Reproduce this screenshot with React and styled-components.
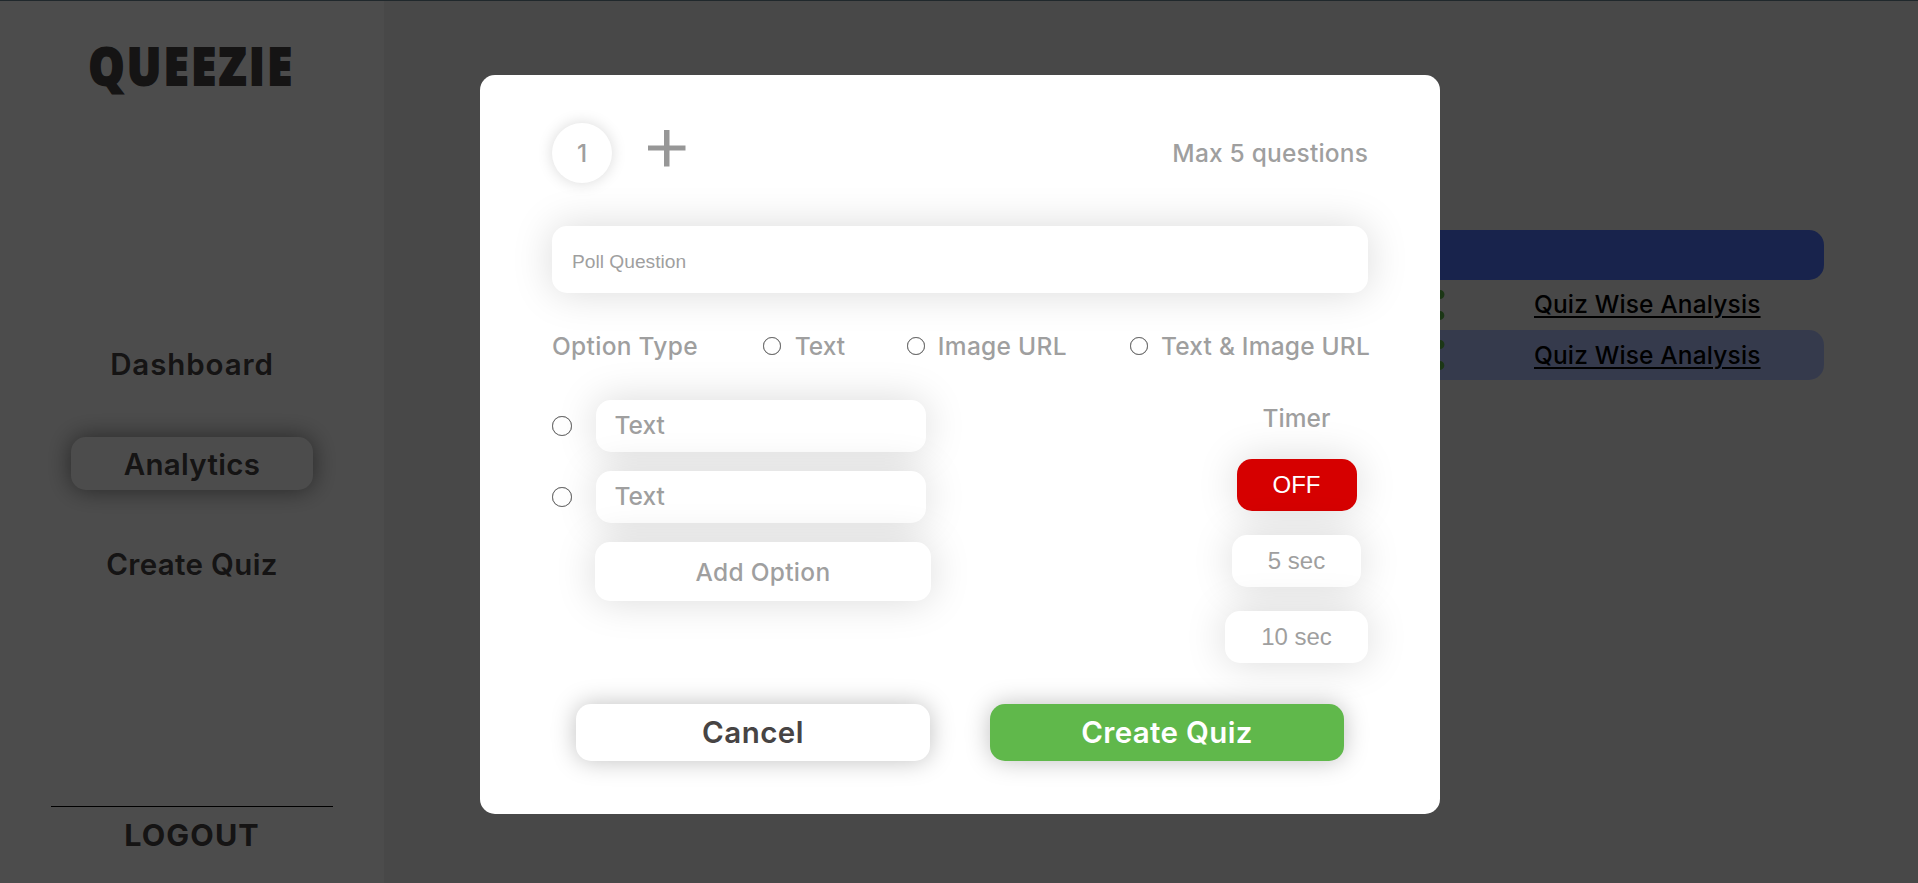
import React from "react";
import styled, { createGlobalStyle } from "styled-components";
import { MdShare } from "react-icons/md";

const GlobalStyle = createGlobalStyle`
  * { box-sizing: border-box; }
  html, body { margin: 0; padding: 0; height: 100%; overflow: hidden; }
  body { font-family: Inter, "Liberation Sans", sans-serif; }
  button, input { font: inherit; border: 0; margin: 0; padding: 0; outline: 0; }
`;

const Page = styled.div`
  display: flex;
  width: 100%;
  height: 883px;
  border-top: 1px solid #6b8794;
  background: #f2f2f2;
`;

const Sidebar = styled.aside`
  display: flex;
  flex-direction: column;
  align-items: center;
  width: 384px;
  flex: none;
  background: #fff;
  color: #474444;
`;

const Logo = styled.h1`
  margin: 28px 0 0;
  height: 72px;
  line-height: 72px;
  font-family: "Open Sans", sans-serif;
  font-size: 51px;
  font-weight: 800;
  letter-spacing: 3px;
  white-space: nowrap;
  -webkit-text-stroke: 1.8px #474444;
  transform: scaleX(0.885);
`;

const Nav = styled.nav`
  display: flex;
  flex-direction: column;
  gap: 47px;
  margin-top: 236px;
`;

const NavItem = styled.a`
  width: 242px;
  height: 53px;
  line-height: 54px;
  border-radius: 15px;
  text-align: center;
  font-size: 29.5px;
  font-weight: 600;
  letter-spacing: ${(p) => p.$spacing}px;
  box-shadow: ${(p) => (p.$active ? "0 0 25px rgba(0, 0, 0, 0.5)" : "none")};
`;

const Logout = styled.div`
  margin-top: auto;
  margin-bottom: 20px;
  width: 282px;
  border-top: 1px solid #000;
  padding-top: 8px;
  height: 57px;
  line-height: 40px;
  text-align: center;
  font-size: 30.5px;
  font-weight: 700;
  letter-spacing: 1.1px;
`;

const Main = styled.main`
  flex: 1;
  padding: 229px 94px 0 96px;
`;

const TableRow = styled.div`
  display: flex;
  align-items: center;
  justify-content: flex-end;
  height: 50px;
  padding-right: 62px;
  border-radius: 15px;
  color: #60b84b;
  background: ${(p) => p.$bg || "transparent"};
`;

const AnalysisLink = styled.a`
  width: 228px;
  margin-left: 85px;
  padding-bottom: ${(p) => p.$lift || 0}px;
  color: #000;
  font-size: 24.5px;
  font-weight: 500;
  letter-spacing: 0.15px;
  white-space: nowrap;
  text-decoration: underline;
  text-decoration-thickness: 2px;
  text-underline-offset: 3px;
`;

const Overlay = styled.div`
  position: fixed;
  inset: 0;
  display: flex;
  align-items: flex-start;
  justify-content: center;
  padding: 75px 0 0 2px;
  background: rgba(0, 0, 0, 0.7);
`;

const Modal = styled.section`
  display: flex;
  flex-direction: column;
  width: 960px;
  height: 739px;
  padding: 48px 72px 0;
  border-radius: 15px;
  background: #fff;
  color: #9f9f9f;
  font-size: 24.5px;
  font-weight: 500;
`;

const TopRow = styled.div`
  display: flex;
  align-items: center;
  height: 60px;
`;

const QuestionNumber = styled.div`
  width: 60px;
  height: 60px;
  line-height: 61px;
  border-radius: 50%;
  text-align: center;
  background: #fff;
  box-shadow: 0 0 15px rgba(0, 0, 0, 0.15);
`;

const PlusIcon = styled.svg`
  display: block;
  width: 38px;
  height: 37px;
  margin: 0 0 10px 36px;
`;

const Label = styled.span`
  white-space: nowrap;
  letter-spacing: ${(p) => p.$spacing || 0}px;
  margin-right: ${(p) => -(p.$spacing || 0)}px;
`;

const PushRight = styled.div`
  margin-left: auto;
`;

const QuestionInput = styled.input`
  flex: none;
  width: 100%;
  height: 67px;
  margin-top: 43px;
  padding: 4px 19px 0 20px;
  border-radius: 15px;
  background: #fff;
  font-family: "Liberation Sans", Arial, sans-serif;
  font-size: 19.2px;
  font-weight: 400;
  box-shadow: 0 0 40px rgba(0, 0, 0, 0.15);
  &::placeholder { color: #9f9f9f; opacity: 1; }
`;

const TypeRow = styled.div`
  display: flex;
  align-items: center;
  justify-content: space-between;
  height: 36px;
  margin-top: 35px;
`;

const TypeChoice = styled.label`
  display: flex;
  align-items: center;
  gap: ${(p) => p.$gap}px;
  width: ${(p) => p.$width}px;
`;

const Radio = styled.span`
  flex: none;
  width: ${(p) => p.$size}px;
  height: ${(p) => p.$size}px;
  border: 1.3px solid #6b6b6b;
  box-shadow: 0 0 0.5px #6b6b6b;
  border-radius: 50%;
  background: #fff;
`;

const Body = styled.div`
  display: flex;
  justify-content: space-between;
  height: 304px;
  margin-top: 36px;
`;

const Options = styled.div`
  display: flex;
  flex-direction: column;
  gap: 19px;
`;

const OptionRow = styled.div`
  display: flex;
  align-items: center;
  gap: 24px;
`;

const OptionInput = styled.input`
  width: 330px;
  height: 52px;
  padding: 0 19px 2px 18.5px;
  border-radius: 15px;
  background: #fff;
  box-shadow: 0 0 40px rgba(0, 0, 0, 0.15);
  &::placeholder { color: #9f9f9f; opacity: 1; }
`;

const AddOption = styled.button`
  width: 336px;
  height: 59px;
  margin-left: 43px;
  border-radius: 15px;
  background: #fff;
  color: #9f9f9f;
  letter-spacing: 0.3px;
  box-shadow: 0 0 40px rgba(0, 0, 0, 0.15);
`;

const Timer = styled.div`
  display: flex;
  flex-direction: column;
  align-items: center;
  gap: 24px;
`;

const TimerTitle = styled.div`
  height: 35px;
  line-height: 36px;
`;

const TimerButton = styled.button`
  width: ${(p) => p.$width}px;
  height: 52px;
  border-radius: 15px;
  font-family: "Liberation Sans", Arial, sans-serif;
  font-size: 24px;
  font-weight: 400;
  color: ${(p) => (p.$off ? "#fff" : "#9f9f9f")};
  background: ${(p) => (p.$off ? "#d60000" : "#fff")};
  box-shadow: 0 0 40px rgba(0, 0, 0, 0.15);
`;

const Actions = styled.div`
  display: flex;
  justify-content: center;
  gap: 60px;
`;

const ActionButton = styled.button`
  width: 354px;
  height: 57px;
  padding-bottom: 2px;
  border-radius: 15px;
  font-size: 29.5px;
  font-weight: 600;
  letter-spacing: ${(p) => p.$spacing}px;
  color: ${(p) => (p.$primary ? "#fff" : "#474444")};
  background: ${(p) => (p.$primary ? "#60b84b" : "#fff")};
  box-shadow: 0 0 25px rgba(0, 0, 0, 0.25);
`;

export default function App() {
  return (
    <>
      <GlobalStyle />
      <Page>
        <Sidebar>
          <Logo>QUEEZIE</Logo>
          <Nav>
            <NavItem $spacing={0.9}>Dashboard</NavItem>
            <NavItem $active $spacing={0.3}>Analytics</NavItem>
            <NavItem $spacing={0.35}>Create Quiz</NavItem>
          </Nav>
          <Logout>LOGOUT</Logout>
        </Sidebar>
        <Main>
          <TableRow $bg="#5076ff" />
          <TableRow>
            <MdShare size={36} />
            <AnalysisLink $lift={2}>Quiz Wise Analysis</AnalysisLink>
          </TableRow>
          <TableRow $bg="#b3c4ff">
            <MdShare size={36} />
            <AnalysisLink>Quiz Wise Analysis</AnalysisLink>
          </TableRow>
        </Main>
      </Page>
      <Overlay>
        <Modal>
          <TopRow>
            <QuestionNumber>1</QuestionNumber>
            <PlusIcon viewBox="0 0 38 37">
              <path d="M16 0h5.5v15.5H37.5v5H21.5V36.5H16V20.5H0v-5h16z" fill="#979797" />
            </PlusIcon>
            <PushRight>
              <Label $spacing={0.2}>Max 5 questions</Label>
            </PushRight>
          </TopRow>
          <QuestionInput placeholder="Poll Question" />
          <TypeRow>
            <Label $spacing={0.3}>Option Type</Label>
            <TypeChoice $gap={14} $width={79}>
              <Radio $size={18} />
              <Label>Text</Label>
            </TypeChoice>
            <TypeChoice $gap={13} $width={158}>
              <Radio $size={18} />
              <Label $spacing={0.3}>Image URL</Label>
            </TypeChoice>
            <TypeChoice $gap={13} $width={238}>
              <Radio $size={18} />
              <Label $spacing={0.2}>Text &amp; Image URL</Label>
            </TypeChoice>
          </TypeRow>
          <Body>
            <Options>
              <OptionRow>
                <Radio $size={20} />
                <OptionInput placeholder="Text" />
              </OptionRow>
              <OptionRow>
                <Radio $size={20} />
                <OptionInput placeholder="Text" />
              </OptionRow>
              <AddOption>Add Option</AddOption>
            </Options>
            <Timer>
              <TimerTitle>Timer</TimerTitle>
              <TimerButton $off $width={120}>OFF</TimerButton>
              <TimerButton $width={129}>5 sec</TimerButton>
              <TimerButton $width={143}>10 sec</TimerButton>
            </Timer>
          </Body>
          <Actions>
            <ActionButton $spacing={0.5}>Cancel</ActionButton>
            <ActionButton $primary $spacing={0.35}>Create Quiz</ActionButton>
          </Actions>
        </Modal>
      </Overlay>
    </>
  );
}
